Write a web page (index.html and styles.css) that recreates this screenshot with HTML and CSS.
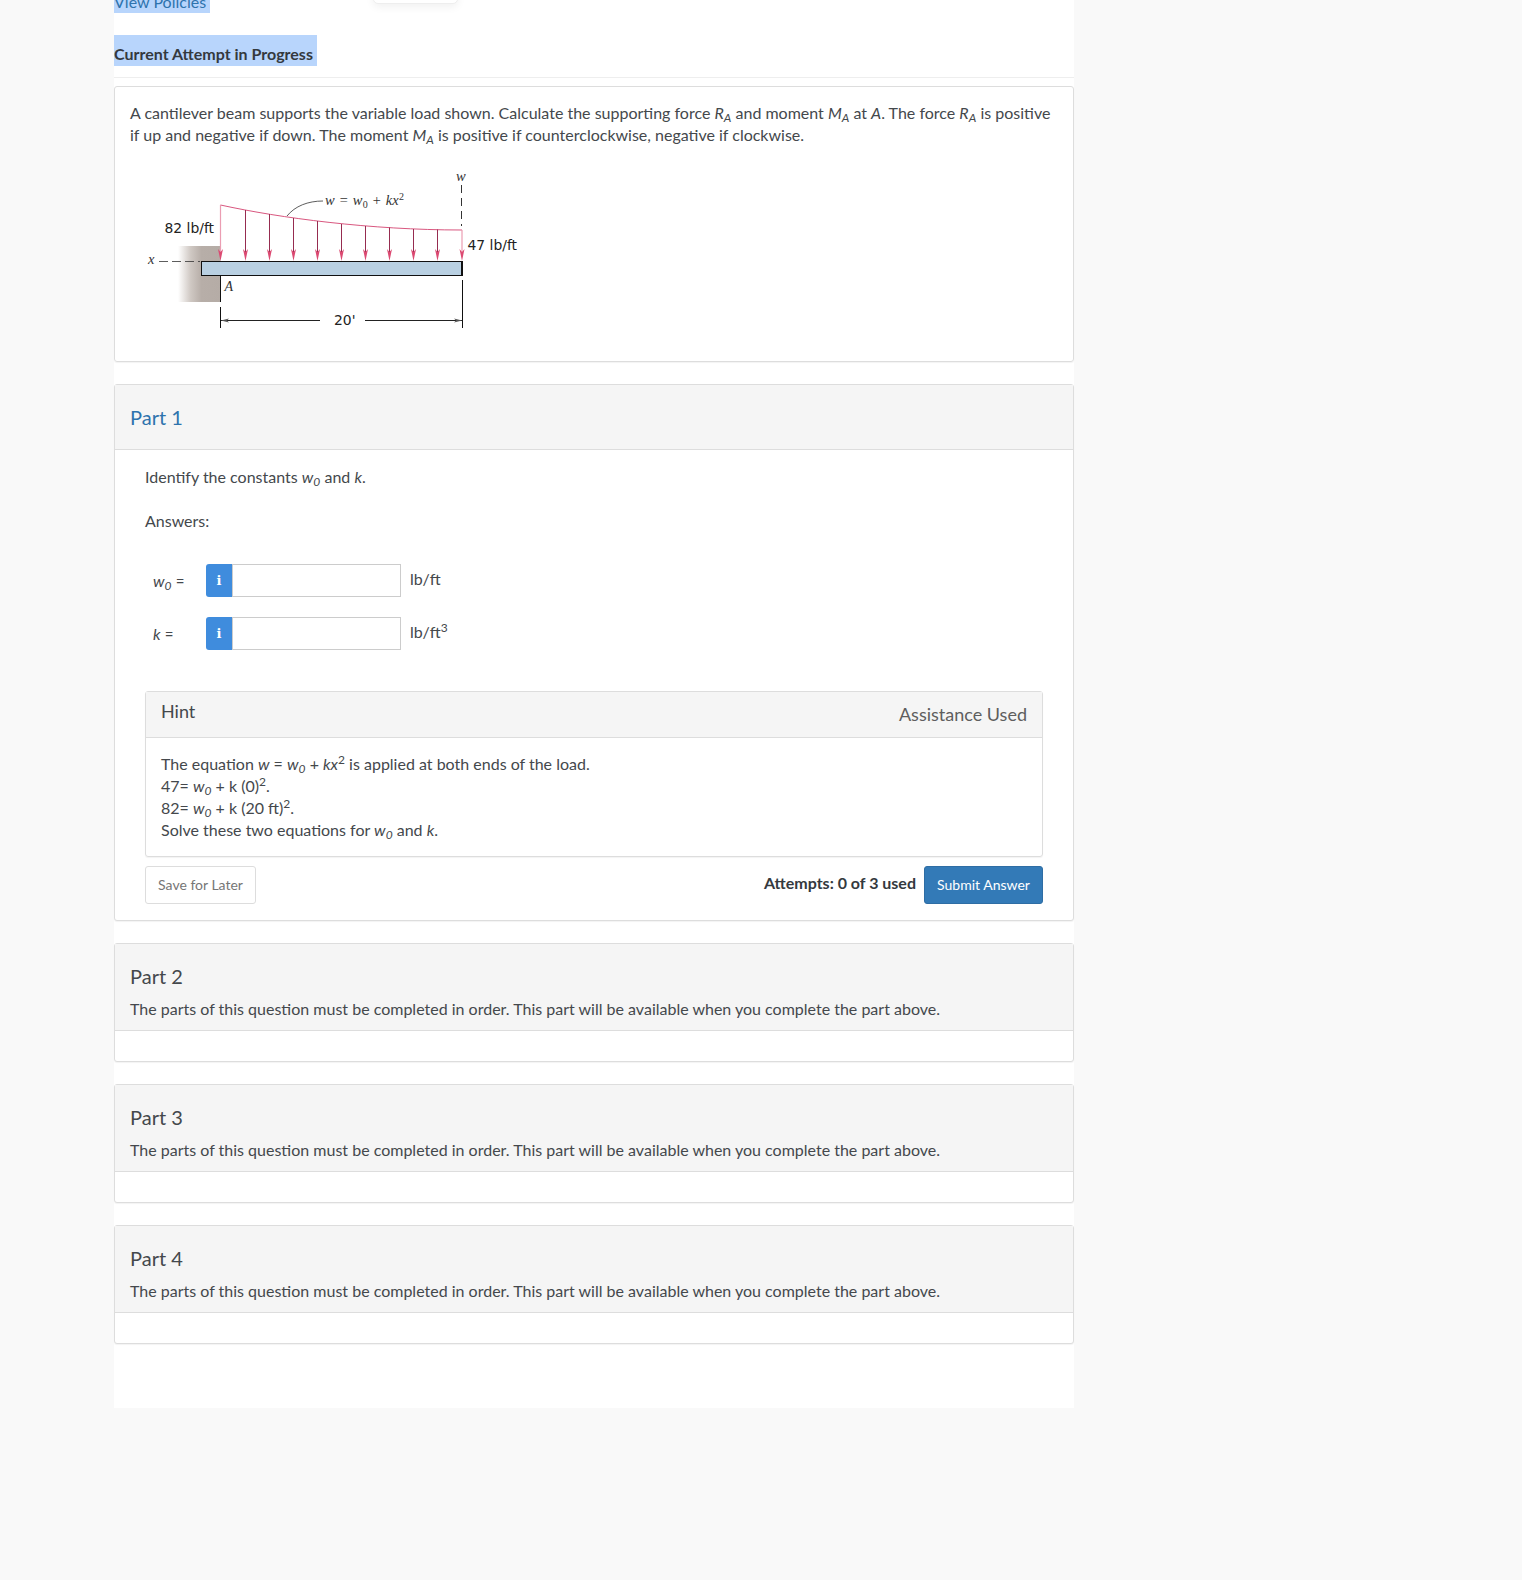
FILE: index.html
```html
<!DOCTYPE html>
<html lang="en">
<head>
<meta charset="utf-8">
<title>Current Attempt in Progress</title>
<link rel="stylesheet" href="styles.css">
</head>
<body>
<main class="page">
  <div class="popup-edge"></div>
  <div class="policies"><a class="sel link">View Policies</a></div>
  <div class="attempt"><span class="sel attempt-label">Current Attempt in Progress</span></div>
  <hr class="rule">

  <section class="question">
    <p>A cantilever beam supports the variable load shown. Calculate the supporting force <i>R<sub>A</sub></i> and moment <i>M<sub>A</sub></i> at <i>A</i>. The force <i>R<sub>A</sub></i> is positive if up and negative if down. The moment <i>M<sub>A</sub></i> is positive if counterclockwise, negative if clockwise.</p>
    <svg class="figure" width="400" height="180" viewBox="0 0 400 180" role="img" aria-label="Cantilever beam with variable load">
      <defs>
        <linearGradient id="wall" x1="0" x2="1" y1="0" y2="0">
          <stop offset="0" stop-color="#ffffff"/>
          <stop offset="0.3" stop-color="#cfc8c3"/>
          <stop offset="0.55" stop-color="#b7aea8"/>
          <stop offset="1" stop-color="#b5aca6"/>
        </linearGradient>
      </defs>
      <rect x="48" y="86" width="42.5" height="56" fill="url(#wall)"/>
      <rect x="71.5" y="101.5" width="261" height="14" fill="#b9d0e2" stroke="#111" stroke-width="1"/>
      <path d="M332 101v15" stroke="#111" stroke-width="2"/>
      <path d="M90.5 116v26M90.5 147v21M332.5 120v48" stroke="#111" stroke-width="1" fill="none"/>
      <path d="M90.5 45C150 58 240 70 332 70" fill="none" stroke="#d9577f" stroke-width="1"/>
      <path d="M90.5 45V92M332 70V92" stroke="#eb9db2" stroke-width="1.2"/>
      <path d="M115.5 50V92M139.5 54V92M163.5 58V92M187.5 61V92M211.5 64V92M235.5 66V92M259.5 67.5V92M283.5 69V92M307.5 69.5V92" stroke="#962c50" stroke-width="1"/>
      <path d="M90.5 101l-2.5-12 2.5 3 2.5-3zM115.5 101l-2.5-12 2.5 3 2.5-3zM139.5 101l-2.5-12 2.5 3 2.5-3zM163.5 101l-2.5-12 2.5 3 2.5-3zM187.5 101l-2.5-12 2.5 3 2.5-3zM211.5 101l-2.5-12 2.5 3 2.5-3zM235.5 101l-2.5-12 2.5 3 2.5-3zM259.5 101l-2.5-12 2.5 3 2.5-3zM283.5 101l-2.5-12 2.5 3 2.5-3zM307.5 101l-2.5-12 2.5 3 2.5-3zM332 101l-2.5-12 2.5 3 2.5-3z" fill="#dc4a72"/>
      <path d="M157 56C165 46 178 41 193 41" fill="none" stroke="#333" stroke-width="0.8"/>
      <path d="M331.5 25v41" stroke="#333" stroke-width="1" stroke-dasharray="8 5" fill="none"/>
      <path d="M29 101.5h41" stroke="#333" stroke-width="0.8" stroke-dasharray="9 4" fill="none"/>
      <path d="M91 160.5h99M235 160.5h97" stroke="#222" stroke-width="1" fill="none"/>
      <path d="M91 160.5l8-2-2 2 2 2zM332 160.5l-8-2 2 2-2 2z" fill="#555"/>
      <text class="fig-math" x="18" y="104">x</text>
      <text class="fig-math" x="326" y="21">w</text>
      <text class="fig-math" x="195" y="45">w = w<tspan class="fig-small" dy="3">0</tspan><tspan dy="-3"> + kx</tspan><tspan class="fig-small" dy="-5">2</tspan></text>
      <text class="fig-math fig-a" x="94.5" y="131">A</text>
      <text class="fig-label" x="34.5" y="73">82 lb/ft</text>
      <text class="fig-label" x="337.5" y="90">47 lb/ft</text>
      <text class="fig-label" x="204" y="165">20'</text>
    </svg>
  </section>

  <section class="panel part-one">
    <header class="panel-head head-active"><h2 class="part-title link">Part 1</h2></header>
    <div class="panel-body">
      <p class="prompt">Identify the constants <i>w<sub>0</sub></i> and <i>k</i>.</p>
      <p class="answers">Answers:</p>
      <div class="field">
        <span class="field-label"><i>w<sub>0</sub></i> <small>=</small></span>
        <span class="info">i</span>
        <span class="box"></span>
        <span class="unit">lb/ft</span>
      </div>
      <div class="field">
        <span class="field-label"><i>k</i> <small>=</small></span>
        <span class="info">i</span>
        <span class="box"></span>
        <span class="unit">lb/ft<sup>3</sup></span>
      </div>
      <div class="hint">
        <div class="hint-head"><span class="hint-title">Hint</span><span class="assist">Assistance Used</span></div>
        <div class="hint-body">
          <div>The equation <i>w</i> = <i>w<sub>0</sub></i> + <i>kx</i><sup>2</sup> is applied at both ends of the load.</div>
          <div>47= <i>w<sub>0</sub></i> + k (0)<sup>2</sup>.</div>
          <div>82= <i>w<sub>0</sub></i> + k (20 ft)<sup>2</sup>.</div>
          <div>Solve these two equations for <i>w<sub>0</sub></i> and <i>k</i>.</div>
        </div>
      </div>
      <div class="actions">
        <button class="btn btn-plain" type="button">Save for Later</button>
        <div class="actions-right">
          <strong class="attempts">Attempts: 0 of 3 used</strong>
          <button class="btn btn-primary" type="button">Submit Answer</button>
        </div>
      </div>
    </div>
  </section>

  <section class="panel locked">
    <header class="panel-head">
      <h2 class="part-title">Part 2</h2>
      <p class="locked-note">The parts of this question must be completed in order. This part will be available when you complete the part above.</p>
    </header>
    <div class="locked-body"></div>
  </section>
  <section class="panel locked">
    <header class="panel-head">
      <h2 class="part-title">Part 3</h2>
      <p class="locked-note">The parts of this question must be completed in order. This part will be available when you complete the part above.</p>
    </header>
    <div class="locked-body"></div>
  </section>
  <section class="panel locked">
    <header class="panel-head">
      <h2 class="part-title">Part 4</h2>
      <p class="locked-note">The parts of this question must be completed in order. This part will be available when you complete the part above.</p>
    </header>
    <div class="locked-body"></div>
  </section>
</main>
</body>
</html>
```
FILE: styles.css
```css
* { box-sizing: border-box; }
html, body { margin: 0; padding: 0; }
html { height: 100%; overflow: hidden; }
body {
  height: 1580px;
  background: #f9f9f9;
  color: #44484c;
  font-family: Lato, "Open Sans", sans-serif;
  font-size: 16px;
  line-height: 22px;
  overflow: hidden;
}
p { margin: 0; }
sub, sup { font-size: 75%; line-height: 0; position: relative; vertical-align: baseline; }
sub { bottom: -0.25em; }
sup { top: -0.5em; }

.page {
  position: relative;
  width: 960px;
  height: 1417px;
  margin: -9px 0 0 114px;
  background: #fff;
}
.popup-edge {
  position: absolute;
  left: 259px;
  top: -10px;
  width: 85px;
  height: 23px;
  background: #fff;
  border: 1px solid #eee;
  border-radius: 5px;
  box-shadow: 0 3px 8px rgba(0, 0, 0, 0.06);
}
.link { color: #2e73ad; }
.sel { background: #b8d5fc; }
.policies { height: 22px; }
.policies .link { display: inline-block; padding-right: 4px; }
.attempt { margin-top: 22px; height: 31px; }
.attempt-label {
  display: inline-block;
  height: 31px;
  padding: 8px 4px 0 0;
  font-weight: 700;
  color: #34393e;
}
.rule { margin: 11px 0 8px; border: 0; border-top: 1px solid #eee; }

.question {
  border: 1px solid #ddd;
  border-radius: 3px;
  padding: 15px 15px 21px;
  box-shadow: 0 1px 1px rgba(0, 0, 0, 0.05);
}
.figure { display: block; margin: 14px 0 0; }
.fig-math { font-family: "Liberation Serif", serif; font-style: italic; font-size: 14.5px; fill: #333; letter-spacing: 0.25px; }
.fig-small { font-size: 10px; font-style: normal; }
.fig-a { font-size: 14px; }
.fig-label { font-family: "DejaVu Sans", sans-serif; font-size: 13.9px; fill: #222; }

.panel {
  margin-top: 22px;
  border: 1px solid #ddd;
  border-radius: 3px;
  background: #fff;
  box-shadow: 0 1px 1px rgba(0, 0, 0, 0.05);
}
.panel-head {
  padding: 18px 15px 0;
  background: #f5f5f5;
  border-bottom: 1px solid #ddd;
}
.head-active { height: 65px; }
.part-title { margin: 0; font-size: 20px; font-weight: 400; line-height: 28px; }
.locked .panel-head { height: 87px; padding-top: 18px; }
.locked-note { margin-top: 8px; }
.locked-body { height: 30px; }

.panel-body { padding: 16px 30px 16px; }
.answers { margin: 22px 0 32px; }
.field { display: flex; align-items: center; height: 33px; margin-bottom: 20px; }
.field-label { width: 61px; padding-left: 8px; }
.field-label small { font-size: 15px; }
.info {
  width: 26px;
  height: 33px;
  background: #3f8cdd;
  border-radius: 3px 0 0 3px;
  color: #fff;
  font-family: "DejaVu Serif", serif;
  font-weight: 700;
  font-size: 13px;
  line-height: 33px;
  text-align: center;
}
.box { width: 169px; height: 33px; border: 1px solid #ccc; background: #fff; }
.unit { margin: -4px 0 0 9px; }

.hint { margin-top: 41px; border: 1px solid #ddd; border-radius: 3px; box-shadow: 0 1px 1px rgba(0, 0, 0, 0.05); }
.hint-head {
  display: flex;
  justify-content: space-between;
  height: 46px;
  padding: 7px 15px 0;
  background: #f5f5f5;
  border-bottom: 1px solid #ddd;
}
.hint-title { font-size: 18px; line-height: 24px; }
.assist { font-size: 18px; line-height: 30px; color: #5e5e5e; }
.hint-body { padding: 15px 15px 15px; }

.actions { display: flex; justify-content: space-between; align-items: flex-start; margin-top: 9px; }
.actions-right { display: flex; gap: 8px; align-items: flex-start; }
.attempts { margin-top: 6px; color: #34393e; }
.btn {
  height: 38px;
  padding: 0 12px;
  border-radius: 3px;
  font-family: inherit;
  font-size: 14px;
  line-height: 36px;
}
.btn-plain { background: #fff; border: 1px solid #ddd; color: #767676; width: 111px; }
.btn-primary { background: #337ab7; border: 1px solid #2e6da4; color: #fff; width: 119px; }
```
